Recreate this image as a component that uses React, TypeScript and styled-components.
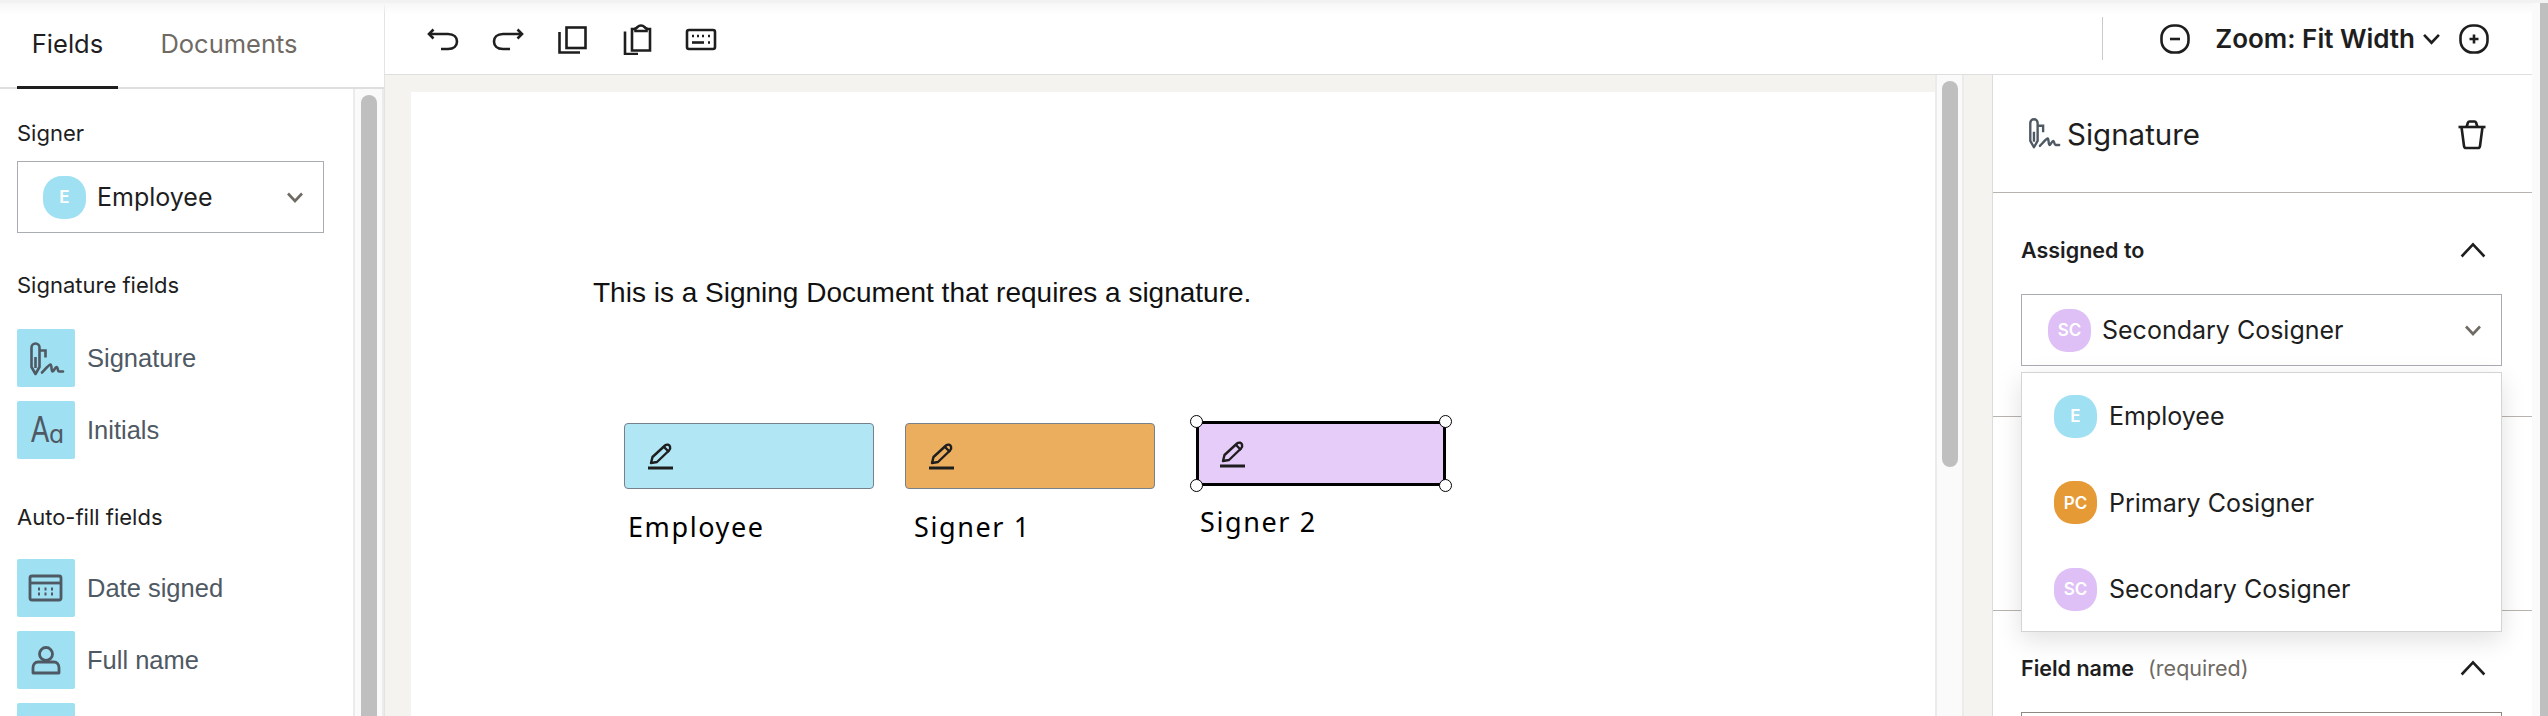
import React from 'react';
import styled, { createGlobalStyle } from 'styled-components';

const GlobalStyle = createGlobalStyle`
  html, body {
    margin: 0;
    padding: 0;
    background: #fff;
  }
  * {
    box-sizing: border-box;
  }
`;

const UI_FONT = `Inter, "Liberation Sans", sans-serif`;
const FIELD_FONT = `"Liberation Sans", Arial, sans-serif`;
const INK = '#1e1e1e';
const SLATE = '#4f5963';
const TILE_BLUE = '#9fe0f3';

const Page = styled.div`
  position: relative;
  width: 2548px;
  height: 716px;
  overflow: hidden;
  display: flex;
  flex-direction: column;
  font-family: ${UI_FONT};
  color: ${INK};
`;

const TopStrip = styled.div`
  height: 3px;
  flex: none;
  background: #f2f2f2;
`;

const TopFade = styled.div`
  position: absolute;
  left: 0;
  right: 16px;
  top: 3px;
  height: 12px;
  background: linear-gradient(#f7f7f7, rgba(255, 255, 255, 0));
  z-index: 3;
  pointer-events: none;
`;

const Main = styled.div`
  flex: 1;
  min-height: 0;
  display: flex;
`;

/* scrollbars */
const Track = styled.div<{ $width: number; $pad: number; $sides?: boolean }>`
  flex: none;
  width: ${(p) => p.$width}px;
  padding-left: ${(p) => p.$pad}px;
  background: #fafafa;
  overflow: hidden;
  border-left: ${(p) => (p.$sides ? '2px solid #ebebeb' : 'none')};
  border-right: ${(p) => (p.$sides ? '2px solid #ebebeb' : 'none')};
`;

const Thumb = styled.div<{ $top: number; $height: number; $square?: boolean }>`
  width: 16px;
  height: ${(p) => p.$height}px;
  margin-top: ${(p) => p.$top}px;
  background: #bfbfbf;
  border-radius: ${(p) => (p.$square ? '0' : '8px')};
`;

/* left sidebar */
const Sidebar = styled.aside`
  flex: none;
  width: 385px;
  display: flex;
  flex-direction: column;
  border-right: 1px solid #e3e3e3;
`;

const Tabs = styled.div`
  flex: none;
  height: 86px;
  padding-left: 17px;
  display: flex;
  gap: 27px;
  border-bottom: 2px solid #dedede;
`;

const Tab = styled.div<{ $active?: boolean }>`
  width: ${(p) => (p.$active ? '101px' : '168px')};
  height: 86px;
  display: flex;
  align-items: center;
  justify-content: center;
  padding-bottom: ${(p) => (p.$active ? 3 : 6)}px;
  font-size: 25.5px;
  color: ${(p) => (p.$active ? INK : '#6f6a63')};
  border-bottom: ${(p) => (p.$active ? `3px solid ${INK}` : 'none')};
`;

const SideBody = styled.div`
  flex: 1;
  min-height: 0;
  display: flex;
`;

const SideContent = styled.div`
  flex: 1;
  min-width: 0;
  padding: 30px 0 0 17px;
  overflow: hidden;
`;

const SectionLabel = styled.div<{ $gap: number; $top?: number }>`
  font-size: 22px;
  line-height: 28px;
  margin-top: ${(p) => p.$top ?? 0}px;
  margin-bottom: ${(p) => p.$gap}px;
`;

const Avatar = styled.span<{ $bg: string }>`
  flex: none;
  width: 43px;
  height: 43px;
  border-radius: 44%;
  background: ${(p) => p.$bg};
  color: #fff;
  font-size: 17px;
  font-weight: 600;
  display: flex;
  align-items: center;
  justify-content: center;
`;

const SelectBox = styled.div<{ $width: number; $pad: number }>`
  width: ${(p) => p.$width}px;
  height: 72px;
  padding: 0 20px 0 ${(p) => p.$pad}px;
  display: flex;
  align-items: center;
  gap: 11px;
  border: 1px solid #a9adb3;
  font-size: 25px;
`;

const SelectText = styled.span`
  flex: 1;
`;

const FieldList = styled.div`
  display: flex;
  flex-direction: column;
  gap: 14px;
`;

const FieldRow = styled.div`
  display: flex;
  align-items: center;
  gap: 12px;
  font-family: ${FIELD_FONT};
  font-size: 25.5px;
  color: ${SLATE};
`;

const Tile = styled.div`
  flex: none;
  width: 58px;
  height: 58px;
  border-radius: 2px;
  background: ${TILE_BLUE};
  display: flex;
  align-items: center;
  justify-content: center;
`;

const InitialBig = styled.span`
  font-family: ${FIELD_FONT};
  font-size: 36px;
  line-height: 1;
  color: ${SLATE};
  display: inline-block;
  transform: scaleX(0.76);
  margin-right: -3px;
`;

const InitialSmall = styled.span`
  font-family: "DejaVu Sans", sans-serif;
  font-size: 24px;
  line-height: 1;
  color: ${SLATE};
  align-self: center;
  margin-top: 9px;
`;

/* workspace */
const Workspace = styled.div`
  flex: 1;
  min-width: 0;
  display: flex;
  flex-direction: column;
`;

const Toolbar = styled.div`
  flex: none;
  height: 72px;
  padding: 0 42px;
  display: flex;
  align-items: center;
  border-bottom: 1px solid #dedede;
`;

const ToolGroup = styled.div`
  display: flex;
  align-items: center;
  gap: 32.5px;
  flex: 1;
`;

const ToolDivider = styled.div`
  width: 1px;
  height: 43px;
  background: #c9c9c9;
  margin-right: 56px;
`;

const ZoomLabel = styled.span`
  margin-left: 24px;
  font-size: 26px;
  font-weight: 600;
`;

const ZoomCaret = styled.span`
  display: flex;
  margin: 0 18px 0 8px;
`;

const Stage = styled.div`
  flex: 1;
  min-height: 0;
  display: flex;
  background: #f4f3ef;
`;

const DocPane = styled.div`
  flex: 1;
  min-width: 0;
  padding: 17px 0 0 26px;
  overflow: hidden;
`;

const DocPage = styled.div`
  position: relative;
  height: 700px;
  background: #fff;
`;

const DocLine = styled.div`
  position: absolute;
  left: 182px;
  top: 185px;
  font-family: ${FIELD_FONT};
  font-size: 28px;
  line-height: 32px;
  white-space: nowrap;
  color: #111;
`;

const DocField = styled.div<{ $x: number; $y: number; $bg: string; $selected?: boolean }>`
  position: absolute;
  left: ${(p) => p.$x}px;
  top: ${(p) => p.$y}px;
  width: 250px;
  height: ${(p) => (p.$selected ? 65 : 66)}px;
  padding-left: ${(p) => (p.$selected ? 21 : 23)}px;
  display: flex;
  align-items: center;
  background: ${(p) => p.$bg};
  border: ${(p) => (p.$selected ? '3px solid #000' : '1px solid #76818c')};
  border-radius: ${(p) => (p.$selected ? 0 : 4)}px;
`;

const Handle = styled.span<{ $right?: boolean; $bottom?: boolean }>`
  position: absolute;
  width: 13px;
  height: 13px;
  border-radius: 50%;
  background: #fff;
  border: 1px solid #000;
  ${(p) => (p.$right ? 'right: -9px;' : 'left: -9px;')}
  ${(p) => (p.$bottom ? 'bottom: -9px;' : 'top: -9px;')}
`;

const DocFieldLabel = styled.div<{ $x: number; $y: number }>`
  position: absolute;
  left: ${(p) => p.$x}px;
  top: ${(p) => p.$y}px;
  font-family: "Noto Sans", "Open Sans", sans-serif;
  font-size: 27px;
  line-height: 34px;
  letter-spacing: 1.6px;
  color: #000;
  white-space: nowrap;
`;

const Gutter = styled.div`
  flex: none;
  width: 28px;
`;

/* right panel */
const Panel = styled.aside`
  position: relative;
  flex: none;
  width: 540px;
  background: #fff;
  border-left: 1px solid #dcdcdc;
  overflow: hidden;
`;

const PanelHeader = styled.div`
  height: 118px;
  padding: 0 44px 0 35px;
  display: flex;
  align-items: center;
  gap: 6px;
  border-bottom: 1px solid #b9b3ad;
  font-size: 29.5px;
`;

const PanelTitle = styled.span`
  flex: 1;
`;

const PanelSection = styled.div<{ $height: number; $top?: number }>`
  height: ${(p) => p.$height}px;
  padding: ${(p) => p.$top ?? 0}px 0 0 28px;
  border-bottom: 1px solid #b9b3ad;
`;

const SectionHead = styled.div`
  width: 474px;
  height: 28px;
  padding-right: 9px;
  display: flex;
  align-items: center;
  justify-content: space-between;
  font-size: 21.5px;
  font-weight: 600;
  margin-bottom: 30px;
`;

const Hint = styled.span`
  margin-left: 14px;
  font-weight: 400;
  color: #6f6a63;
`;

const NameSection = styled.div`
  padding: 43px 0 0 28px;
`;

const NameInput = styled.div`
  width: 481px;
  height: 50px;
  margin-top: 1px;
  border: 1px solid #8f8880;
`;

const Menu = styled.div`
  position: absolute;
  left: 28px;
  top: 297px;
  width: 481px;
  height: 260px;
  background: #fff;
  border: 1px solid #d4d4d4;
  box-shadow: 0 8px 24px rgba(0, 0, 0, 0.12);
  z-index: 2;
`;

const MenuItem = styled.div`
  height: 86.5px;
  padding-left: 32px;
  display: flex;
  align-items: center;
  gap: 12px;
  font-size: 25px;
`;

const Svg = styled.svg<{ $tone?: string }>`
  flex: none;
  display: block;
  fill: none;
  stroke: ${(p) => p.$tone ?? INK};
  stroke-width: 2.6;
`;

type IconProps = { tone?: string; size?: number };

const SignatureIcon = ({ tone = SLATE, size = 58, view = '0 0 58 58' }: IconProps & { view?: string }) => (
  <Svg $tone={tone} width={size} height={size} viewBox={view} style={{ strokeWidth: 2.6 }}>
    <path d="M14.500 38V18.500a4 4 0 0 1 8 0V38l-4 7Z" strokeLinejoin="round" />
    <path d="M18.500 28V39M22.500 21.500h6v7" />
    <path d="M25 43.500c3-3 7-8 8.500-8s.5 7 2 7 2.500-4.500 4-4.500 1 4.500 2.500 4.500h4" strokeLinecap="round" />
  </Svg>
);

const CalendarIcon = () => (
  <Svg $tone={SLATE} width={58} height={58} viewBox="0 0 58 58" style={{ strokeWidth: 2.8 }}>
    <rect x="13" y="17" width="31" height="24" rx="2" />
    <path d="M13 24H44" />
    <path d="M21 30h2M27.500 30h2M34 30h2M21 35h2M27.500 35h2M34 35h2" />
  </Svg>
);

const PersonIcon = () => (
  <Svg $tone={SLATE} width={58} height={58} viewBox="0 0 58 58" style={{ strokeWidth: 2.8 }}>
    <circle cx="29" cy="23" r="6.500" />
    <path d="M16 42v-5c0-3.500 2-6 5-6h16c3 0 5 2.500 5 6v5Z" strokeLinejoin="round" />
  </Svg>
);

const Chevron = ({ up, size = 16, tone = '#6f6a63', weight = 2.6 }: IconProps & { up?: boolean; weight?: number }) => (
  <Svg $tone={tone} width={size} height={size} viewBox="0 0 16 16" style={{ strokeWidth: (weight * 16) / size }}>
    <path d={up ? 'M1 12 8 4.500 15 12' : 'M1 4.500 8 12 15 4.500'} />
  </Svg>
);

const UndoIcon = () => (
  <Svg width={32} height={32} viewBox="0 0 32 32">
    <path d="M2 11H21c6 0 9 3.500 9 7.500S27 26 21 26H14" />
    <path d="M6.500 6.500 2 11l4.500 4.500" />
  </Svg>
);

const RedoIcon = () => (
  <Svg width={32} height={32} viewBox="0 0 32 32">
    <path d="M30 11H11c-6 0-9 3.500-9 7.500S5 26 11 26h7" />
    <path d="M25.500 6.500 30 11l-4.500 4.500" />
  </Svg>
);

const CopyIcon = () => (
  <Svg width={32} height={32} viewBox="0 0 32 32">
    <rect x="10.500" y="4.500" width="19" height="20.500" />
    <path d="M3.500 9v20.500H24" />
  </Svg>
);

const PasteIcon = () => (
  <Svg width={32} height={32} viewBox="0 0 32 32">
    <path d="M14.500 6H11v21.500h18V6h-3.500" />
    <path d="M14.500 8V5.500c2-1 2.500-3 5.500-3s3.500 2 5.500 3V8Z" />
    <path d="M4 8.500V31h13" />
  </Svg>
);

const KeyboardIcon = () => (
  <Svg width={32} height={32} viewBox="0 0 32 32">
    <rect x="2" y="7" width="28" height="19" rx="2" />
    <path d="M7 13h2M12 13h2M17 13h2M23 13h2M23 19.500h2" />
    <path d="M7 19.500h12" />
  </Svg>
);

const ZoomOutIcon = () => (
  <Svg width={32} height={32} viewBox="0 0 32 32">
    <rect x="2.500" y="2.500" width="27" height="27" rx="12" />
    <path d="M11 16h10" />
  </Svg>
);

const ZoomInIcon = () => (
  <Svg width={32} height={32} viewBox="0 0 32 32">
    <rect x="2.500" y="2.500" width="27" height="27" rx="12" />
    <path d="M11.500 16h9M16 11.500v9" />
  </Svg>
);

const TrashIcon = () => (
  <Svg width={32} height={32} viewBox="0 0 32 32">
    <path d="M2.500 9H29.500" />
    <path d="M5.500 9 8 28c.2 1.500 1 2 2 2h12c1 0 1.800-.5 2-2l2.500-19" />
    <path d="M10.500 9 12 4.500c.2-.7.800-1 1.500-1h5c.7 0 1.300.3 1.500 1L21.500 9" />
  </Svg>
);

const PencilIcon = () => (
  <Svg width={26} height={28} viewBox="0 0 26 28" style={{ strokeWidth: 2.4 }}>
    <path d="M3 21 4.500 15 17 3.500c2-1.700 4.500-.7 5 1 .5 1.500.2 2.800-1 4L9 20Z" strokeLinejoin="round" />
    <path d="M16 5l5 5" />
    <path d="M0 26H25" style={{ strokeWidth: 3 }} />
  </Svg>
);

const people = [
  { initials: 'E', name: 'Employee', color: TILE_BLUE },
  { initials: 'PC', name: 'Primary Cosigner', color: '#e69a36' },
  { initials: 'SC', name: 'Secondary Cosigner', color: '#dfc0f6' },
];

const App = () => {
  return (
    <Page>
      <GlobalStyle />
      <TopStrip />
      <TopFade />
      <Main>
        <Sidebar>
          <Tabs>
            <Tab $active>Fields</Tab>
            <Tab>Documents</Tab>
          </Tabs>
          <SideBody>
            <SideContent>
              <SectionLabel $gap={14}>Signer</SectionLabel>
              <SelectBox $width={307} $pad={25}>
                <Avatar $bg={TILE_BLUE}>E</Avatar>
                <SelectText>Employee</SelectText>
                <Chevron />
              </SelectBox>
              <SectionLabel $top={38} $gap={30}>Signature fields</SectionLabel>
              <FieldList>
                <FieldRow>
                  <Tile>
                    <SignatureIcon />
                  </Tile>
                  Signature
                </FieldRow>
                <FieldRow>
                  <Tile>
                    <InitialBig>A</InitialBig>
                    <InitialSmall>ɑ</InitialSmall>
                  </Tile>
                  Initials
                </FieldRow>
              </FieldList>
              <SectionLabel $top={44} $gap={28}>Auto-fill fields</SectionLabel>
              <FieldList>
                <FieldRow>
                  <Tile>
                    <CalendarIcon />
                  </Tile>
                  Date signed
                </FieldRow>
                <FieldRow>
                  <Tile>
                    <PersonIcon />
                  </Tile>
                  Full name
                </FieldRow>
                <FieldRow>
                  <Tile />
                </FieldRow>
              </FieldList>
            </SideContent>
            <Track $width={31} $pad={6} $sides>
              <Thumb $top={6} $height={700} />
            </Track>
          </SideBody>
        </Sidebar>
        <Workspace>
          <Toolbar>
            <ToolGroup>
              <UndoIcon />
              <RedoIcon />
              <CopyIcon />
              <PasteIcon />
              <KeyboardIcon />
            </ToolGroup>
            <ToolDivider />
            <ZoomOutIcon />
            <ZoomLabel>Zoom: Fit Width</ZoomLabel>
            <ZoomCaret>
              <Chevron size={17} tone={INK} />
            </ZoomCaret>
            <ZoomInIcon />
          </Toolbar>
          <Stage>
            <DocPane>
              <DocPage>
                <DocLine>This is a Signing Document that requires a signature.</DocLine>
                <DocField $x={213} $y={331} $bg="#b1e6f5">
                  <PencilIcon />
                </DocField>
                <DocField $x={494} $y={331} $bg="#ebae5f">
                  <PencilIcon />
                </DocField>
                <DocField $x={785} $y={329} $bg="#e6ccf8" $selected>
                  <PencilIcon />
                  <Handle />
                  <Handle $right />
                  <Handle $bottom />
                  <Handle $right $bottom />
                </DocField>
                <DocFieldLabel $x={217} $y={418}>Employee</DocFieldLabel>
                <DocFieldLabel $x={503} $y={418}>Signer 1</DocFieldLabel>
                <DocFieldLabel $x={789} $y={413}>Signer 2</DocFieldLabel>
              </DocPage>
            </DocPane>
            <Track $width={29} $pad={5} $sides>
              <Thumb $top={6} $height={386} />
            </Track>
            <Gutter />
            <Panel>
              <PanelHeader>
                <SignatureIcon view="12 12 36 36" size={33} />
                <PanelTitle>Signature</PanelTitle>
                <TrashIcon />
              </PanelHeader>
              <PanelSection $height={224} $top={43}>
                <SectionHead>
                  Assigned to
                  <Chevron up size={26} tone={INK} />
                </SectionHead>
                <SelectBox $width={481} $pad={26}>
                  <Avatar $bg="#dfc0f6">SC</Avatar>
                  <SelectText>Secondary Cosigner</SelectText>
                  <Chevron />
                </SelectBox>
              </PanelSection>
              <PanelSection $height={194} />
              <NameSection>
                <SectionHead>
                  <span>
                    Field name<Hint>(required)</Hint>
                  </span>
                  <Chevron up size={26} tone={INK} />
                </SectionHead>
                <NameInput />
              </NameSection>
              <Menu>
                {people.map((person) => (
                  <MenuItem key={person.initials}>
                    <Avatar $bg={person.color}>{person.initials}</Avatar>
                    {person.name}
                  </MenuItem>
                ))}
              </Menu>
            </Panel>
          </Stage>
        </Workspace>
        <Track $width={16} $pad={8}>
          <Thumb $top={0} $height={713} $square />
        </Track>
      </Main>
    </Page>
  );
};

export default App;
